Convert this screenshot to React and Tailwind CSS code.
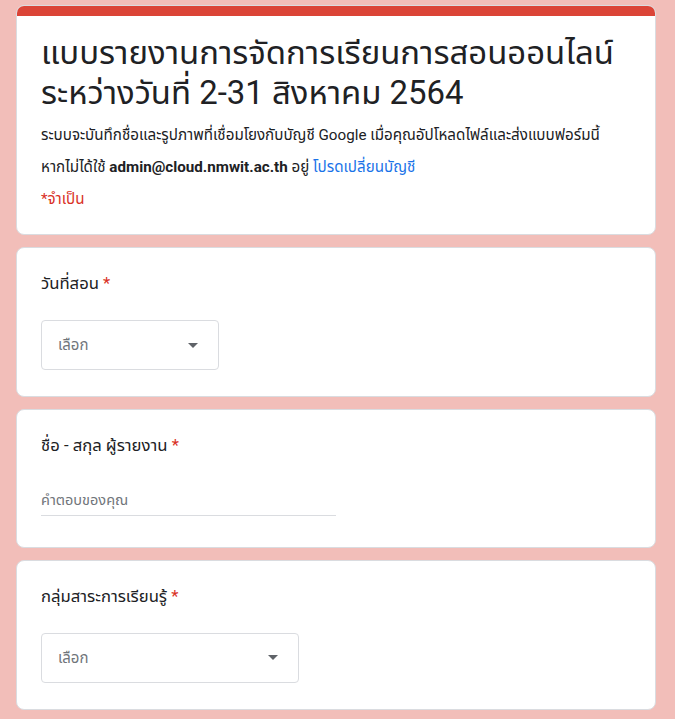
import React from "react";

const font = { fontFamily: 'Roboto, "Noto Sans Thai", "Noto Sans", sans-serif' };

function Arrow() {
  return (
    <svg width="10" height="5" viewBox="0 0 10 5" className="shrink-0">
      <path d="M0 0 L10 0 L5 5 Z" fill="#5f6368" />
    </svg>
  );
}

function Select({ width }) {
  return (
    <div
      className={`flex h-[50px] items-center justify-between rounded border border-[#dadce0] pl-4 pr-5 ${width}`}
    >
      <span className="text-[15px] text-[#70757a]">เลือก</span>
      <Arrow />
    </div>
  );
}

function Card({ children, className = "" }) {
  return (
    <div className={`rounded-lg border border-[#dadce0] bg-white px-6 ${className}`}>{children}</div>
  );
}

function Q({ label }) {
  return (
    <div className="text-[16.7px] leading-6 text-[#202124]">
      {label} <span className="text-[#d93025]">*</span>
    </div>
  );
}

export default function App() {
  return (
    <div className="min-h-[719px] w-full bg-[#f2beb9]" style={font}>
      <div className="ml-4 flex w-[640px] flex-col gap-3 pt-[5px] pb-4">
        <div className="overflow-hidden rounded-lg border border-[#dadce0] bg-white">
          <div className="h-[10px] bg-[#db4437]" />
          <div className="px-6 pt-[17px] pb-[19px]">
            <h1 className="text-[32.9px] leading-[40px] text-[#202124]">
              แบบรายงานการจัดการเรียนการสอนออนไลน์ ระหว่างวันที่ 2-31 สิงหาคม 2564
            </h1>
            <div className="mt-[6px] text-[15.2px] leading-8 text-[#202124]">
              ระบบจะบันทึกชื่อและรูปภาพที่เชื่อมโยงกับบัญชี Google เมื่อคุณอัปโหลดไฟล์และส่งแบบฟอร์มนี้
            </div>
            <div className="text-[15.2px] leading-8 text-[#202124]">
              หากไม่ได้ใช้ <span className="font-bold">admin@cloud.nmwit.ac.th</span> อยู่{" "}
              <span className="text-[#1a73e8]">โปรดเปลี่ยนบัญชี</span>
            </div>
            <div className="text-[15.2px] leading-8 text-[#d93025]">*จำเป็น</div>
          </div>
        </div>

        <Card className="pt-6 pb-[26px]">
          <Q label="วันที่สอน" />
          <div className="mt-[24px]">
            <Select width="w-[178px]" />
          </div>
        </Card>

        <Card className="pt-6 pb-[31px]">
          <Q label="ชื่อ - สกุล ผู้รายงาน" />
          <div className="mt-[32px] w-[295px] border-b border-[#dadce0] pb-[3px] text-[14.5px] text-[#70757a]">
            คำตอบของคุณ
          </div>
        </Card>

        <Card className="pt-6 pb-[26px]">
          <Q label="กลุ่มสาระการเรียนรู้" />
          <div className="mt-[24px]">
            <Select width="w-[258px]" />
          </div>
        </Card>
      </div>
    </div>
  );
}
